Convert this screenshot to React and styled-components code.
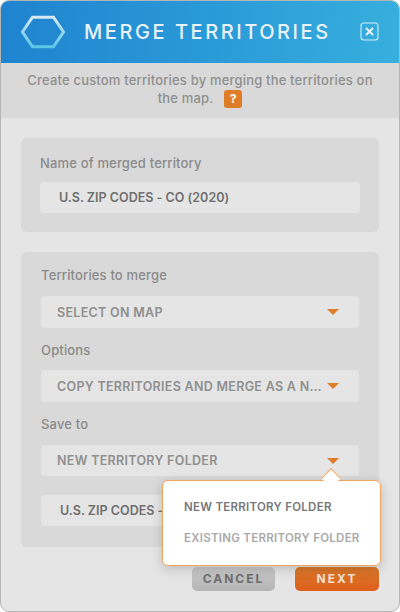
import React from 'react'
import styled, { createGlobalStyle } from 'styled-components'

const GlobalStyle = createGlobalStyle`
  html, body {
    margin: 0;
    padding: 0;
    background: #fff;
  }
  * {
    box-sizing: border-box;
  }
`

const Window = styled.div`
  width: 400px;
  height: 612px;
  display: flex;
  flex-direction: column;
  background: #e5e5e5;
  border: 1px solid #b5b5b5;
  border-radius: 9px;
  overflow: hidden;
  font-family: Inter, "Open Sans", sans-serif;
`

const Header = styled.div`
  height: 62px;
  flex: none;
  display: flex;
  align-items: center;
  padding: 0 20px 0 19px;
  background: linear-gradient(95deg, #1f83cf 0%, #2b9bd8 55%, #37afdd 100%);
`

const Title = styled.h1`
  margin: 0 0 0 18px;
  flex: 1;
  font-size: 20px;
  line-height: 24px;
  font-weight: 500;
  letter-spacing: 2.55px;
  color: #e9f2f7;
  white-space: nowrap;
`

const CloseIcon = styled.svg`
  display: block;
  flex: none;
  width: 19px;
  height: 19px;
  margin-bottom: 2px;
`

const Intro = styled.div`
  height: 55px;
  flex: none;
  padding: 8px 20px 0;
  background: #d9d9d9;
  color: #8f8f8f;
  font-size: 13px;
  line-height: 18px;
  font-weight: 500;
  letter-spacing: 0.18px;
  text-align: center;
`

const HelpBadge = styled.span`
  display: inline-block;
  width: 18px;
  height: 18px;
  margin-left: 11px;
  border-radius: 3px;
  background: #df7c27;
  color: #f6efe6;
  font-size: 12px;
  line-height: 18px;
  font-weight: 800;
  vertical-align: middle;
`

const Body = styled.div`
  flex: 1;
  display: flex;
  flex-direction: column;
  gap: 20px;
  padding: 20px 20px 0;
`

const Card = styled.div`
  display: flex;
  flex-direction: column;
  height: ${(p) => p.$height}px;
  padding: ${(p) => p.$top}px ${(p) => p.$side}px 0;
  border-radius: 6px;
  background: #d9d9d9;
`

const Label = styled.div`
  height: 17px;
  margin-bottom: ${(p) => p.$gap}px;
  font-size: 13px;
  line-height: 17px;
  font-weight: 500;
  letter-spacing: 0.16px;
  color: #8a8a8a;
`

const Field = styled.div`
  position: relative;
  display: flex;
  align-items: center;
  flex: none;
  height: ${(p) => p.$height || 31}px;
  margin-bottom: ${(p) => p.$gap || 0}px;
  padding: 0 20px 0 ${(p) => p.$pad || 16}px;
  border-radius: 4px;
  background: #e5e5e5;
  font-size: 12.5px;
  font-weight: 600;
  letter-spacing: ${(p) => (p.$strong ? '0.02px' : '0.3px')};
  color: ${(p) => (p.$strong ? '#6f6f6f' : '#8f8f8f')};
`

const FieldText = styled.span`
  flex: 1;
  min-width: 0;
  overflow: hidden;
  white-space: nowrap;
  text-overflow: ellipsis;
`

const Caret = styled.span`
  flex: none;
  width: 0;
  height: 0;
  margin-left: 5px;
  border-left: 6px solid transparent;
  border-right: 6px solid transparent;
  border-top: 6px solid #df7c27;
`

const Popover = styled.div`
  position: absolute;
  top: 35px;
  left: 121px;
  width: 219px;
  height: 86px;
  display: flex;
  flex-direction: column;
  justify-content: center;
  gap: 14px;
  padding-left: 21px;
  border: 1px solid #f1a45f;
  border-radius: 6px;
  background: #fff;
  box-shadow: 0 3px 12px rgba(0, 0, 0, 0.18);
  z-index: 2;
`

const PopoverArrow = styled.span`
  position: absolute;
  top: -10px;
  left: 161px;
  width: 14px;
  height: 14px;
  background: #fff;
  border-top: 1px solid #f1a45f;
  border-left: 1px solid #f1a45f;
  transform: rotate(45deg);
`

const PopoverItem = styled.div`
  position: relative;
  font-size: 11.5px;
  line-height: 17px;
  font-weight: 600;
  letter-spacing: 0.27px;
  white-space: nowrap;
  color: ${(p) => (p.$muted ? '#a9a9a9' : '#77777a')};
`

const Footer = styled.div`
  display: flex;
  justify-content: flex-end;
  gap: 20px;
  padding: 0 20px 20px;
`

const Button = styled.div`
  width: ${(p) => p.$width}px;
  height: 24px;
  border-radius: 5px;
  font-size: 12px;
  line-height: 24px;
  font-weight: 700;
  letter-spacing: 2px;
  text-align: center;
  color: ${(p) => (p.$primary ? '#f4e3d4' : '#6e6e70')};
  background: ${(p) =>
    p.$primary
      ? 'linear-gradient(180deg, #dc7a2a 0%, #dd5f1d 100%)'
      : 'linear-gradient(180deg, #c9c9c9 0%, #b5b5b5 100%)'};
`

const HexLogo = () => (
  <svg width="46" height="34" viewBox="0 0 46 34" fill="none" style={{ display: 'block', flex: 'none' }}>
    <defs>
      <linearGradient id="hex" x1="0" y1="0" x2="0" y2="1">
        <stop offset="0" stopColor="#d6e9f3" />
        <stop offset="1" stopColor="#5cc6e6" />
      </linearGradient>
    </defs>
    <path d="M12.5 2.2H33.5L43.5 17L33.5 31.8H12.5L2.5 17Z" stroke="url(#hex)" strokeWidth="3" />
  </svg>
)

export default function App() {
  return (
    <>
      <GlobalStyle />
      <Window>
        <Header>
          <HexLogo />
          <Title>MERGE TERRITORIES</Title>
          <CloseIcon viewBox="0 0 19 19" fill="none">
            <rect x="1" y="1" width="17" height="17" rx="3" stroke="#d5edf7" strokeWidth="1.1" />
            <path d="M6 6L13 13M13 6L6 13" stroke="#e6f4fa" strokeWidth="2" />
          </CloseIcon>
        </Header>
        <Intro>
          Create custom territories by merging the territories on the map.
          <HelpBadge>?</HelpBadge>
        </Intro>
        <Body>
          <Card $height={94} $top={17} $side={19}>
            <Label $gap={10}>Name of merged territory</Label>
            <Field $strong $pad={19}>
              <FieldText>U.S. ZIP CODES - CO (2020)</FieldText>
            </Field>
          </Card>
          <Card $height={295} $top={15} $side={20}>
            <Label $gap={12}>Territories to merge</Label>
            <Field $height={32} $gap={14}>
              <FieldText>SELECT ON MAP</FieldText>
              <Caret />
            </Field>
            <Label $gap={11}>Options</Label>
            <Field $height={32} $gap={14}>
              <FieldText>COPY TERRITORIES AND MERGE AS A NEW TERRITORY</FieldText>
              <Caret />
            </Field>
            <Label $gap={12}>Save to</Label>
            <Field $gap={19}>
              <FieldText>NEW TERRITORY FOLDER</FieldText>
              <Caret />
              <Popover>
                <PopoverArrow />
                <PopoverItem>NEW TERRITORY FOLDER</PopoverItem>
                <PopoverItem $muted>EXISTING TERRITORY FOLDER</PopoverItem>
              </Popover>
            </Field>
            <Field $strong $pad={19}>
              <FieldText>U.S. ZIP CODES - CO (2020)</FieldText>
            </Field>
          </Card>
        </Body>
        <Footer>
          <Button $width={83}>CANCEL</Button>
          <Button $width={84} $primary>NEXT</Button>
        </Footer>
      </Window>
    </>
  )
}
